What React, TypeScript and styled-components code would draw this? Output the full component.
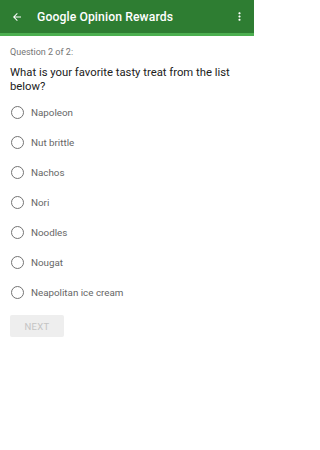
import styled, { createGlobalStyle } from 'styled-components';

const GlobalStyle = createGlobalStyle`
  html, body {
    margin: 0;
    padding: 0;
    background: #ffffff;
    font-family: Roboto, "Liberation Sans", sans-serif;
  }
`;

const Screen = styled.div`
  width: 254px;
  min-height: 450px;
  background: #ffffff;
`;

const AppBar = styled.header`
  height: 33px;
  background: #2e7d32;
  border-bottom: 3px solid #4caf50;
  display: flex;
  align-items: center;
  padding: 0 8px 0 10px;
  color: #ffffff;
`;

const IconButton = styled.span`
  display: flex;
  align-items: center;
  justify-content: center;
  width: 14px;
  height: 14px;
`;

const Title = styled.h1`
  flex: 1;
  margin: 0 0 0 13px;
  font-size: 12.2px;
  font-weight: 500;
  letter-spacing: 0.1px;
`;

const Content = styled.main`
  padding: 10px 10px 0 10px;
  display: flex;
  flex-direction: column;
`;

const Progress = styled.div`
  font-size: 9px;
  line-height: 12px;
  color: #757575;
`;

const Question = styled.h2`
  margin: 8px 0 0 0;
  font-size: 11.3px;
  line-height: 14px;
  font-weight: 400;
  color: #212121;
`;

const Options = styled.div`
  margin-top: 3px;
  display: flex;
  flex-direction: column;
`;

const Option = styled.label`
  height: 30px;
  display: flex;
  align-items: center;
  gap: 7px;
  font-size: 9.8px;
  color: #666666;
`;

const Radio = styled.span`
  box-sizing: border-box;
  width: 13px;
  height: 13px;
  margin-left: 1px;
  border-radius: 50%;
  border: 1.5px solid #737373;
`;

const NextButton = styled.button`
  margin-top: 8px;
  width: 54px;
  height: 22px;
  border: none;
  border-radius: 2px;
  background: #eeeeee;
  color: #c4c4c4;
  font-family: Roboto, "Liberation Sans", sans-serif;
  font-size: 9.5px;
  letter-spacing: 0.3px;
  padding: 0;
`;

const treats = ['Napoleon', 'Nut brittle', 'Nachos', 'Nori', 'Noodles', 'Nougat', 'Neapolitan ice cream'];

export default function App() {
  return <>
    <GlobalStyle />
    <Screen>
      <AppBar>
        <IconButton>
          <svg width="12" height="12" viewBox="0 0 24 24" fill="#ffffff">
            <path d="M20 11H7.83l5.59-5.59L12 4l-8 8 8 8 1.41-1.41L7.83 13H20v-2z" />
          </svg>
        </IconButton>
        <Title>Google Opinion Rewards</Title>
        <IconButton>
          <svg width="13" height="13" viewBox="0 0 24 24" fill="#ffffff">
            <path d="M12 8c1.1 0 2-.9 2-2s-.9-2-2-2-2 .9-2 2 .9 2 2 2zm0 2c-1.1 0-2 .9-2 2s.9 2 2 2 2-.9 2-2-.9-2-2-2zm0 6c-1.1 0-2 .9-2 2s.9 2 2 2 2-.9 2-2-.9-2-2-2z" />
          </svg>
        </IconButton>
      </AppBar>
      <Content>
        <Progress>Question 2 of 2:</Progress>
        <Question>What is your favorite tasty treat from the list below?</Question>
        <Options>
          {treats.map(t => (
            <Option key={t}>
              <Radio />
              {t}
            </Option>
          ))}
        </Options>
        <div>
          <NextButton disabled>NEXT</NextButton>
        </div>
      </Content>
    </Screen>
  </>
}
